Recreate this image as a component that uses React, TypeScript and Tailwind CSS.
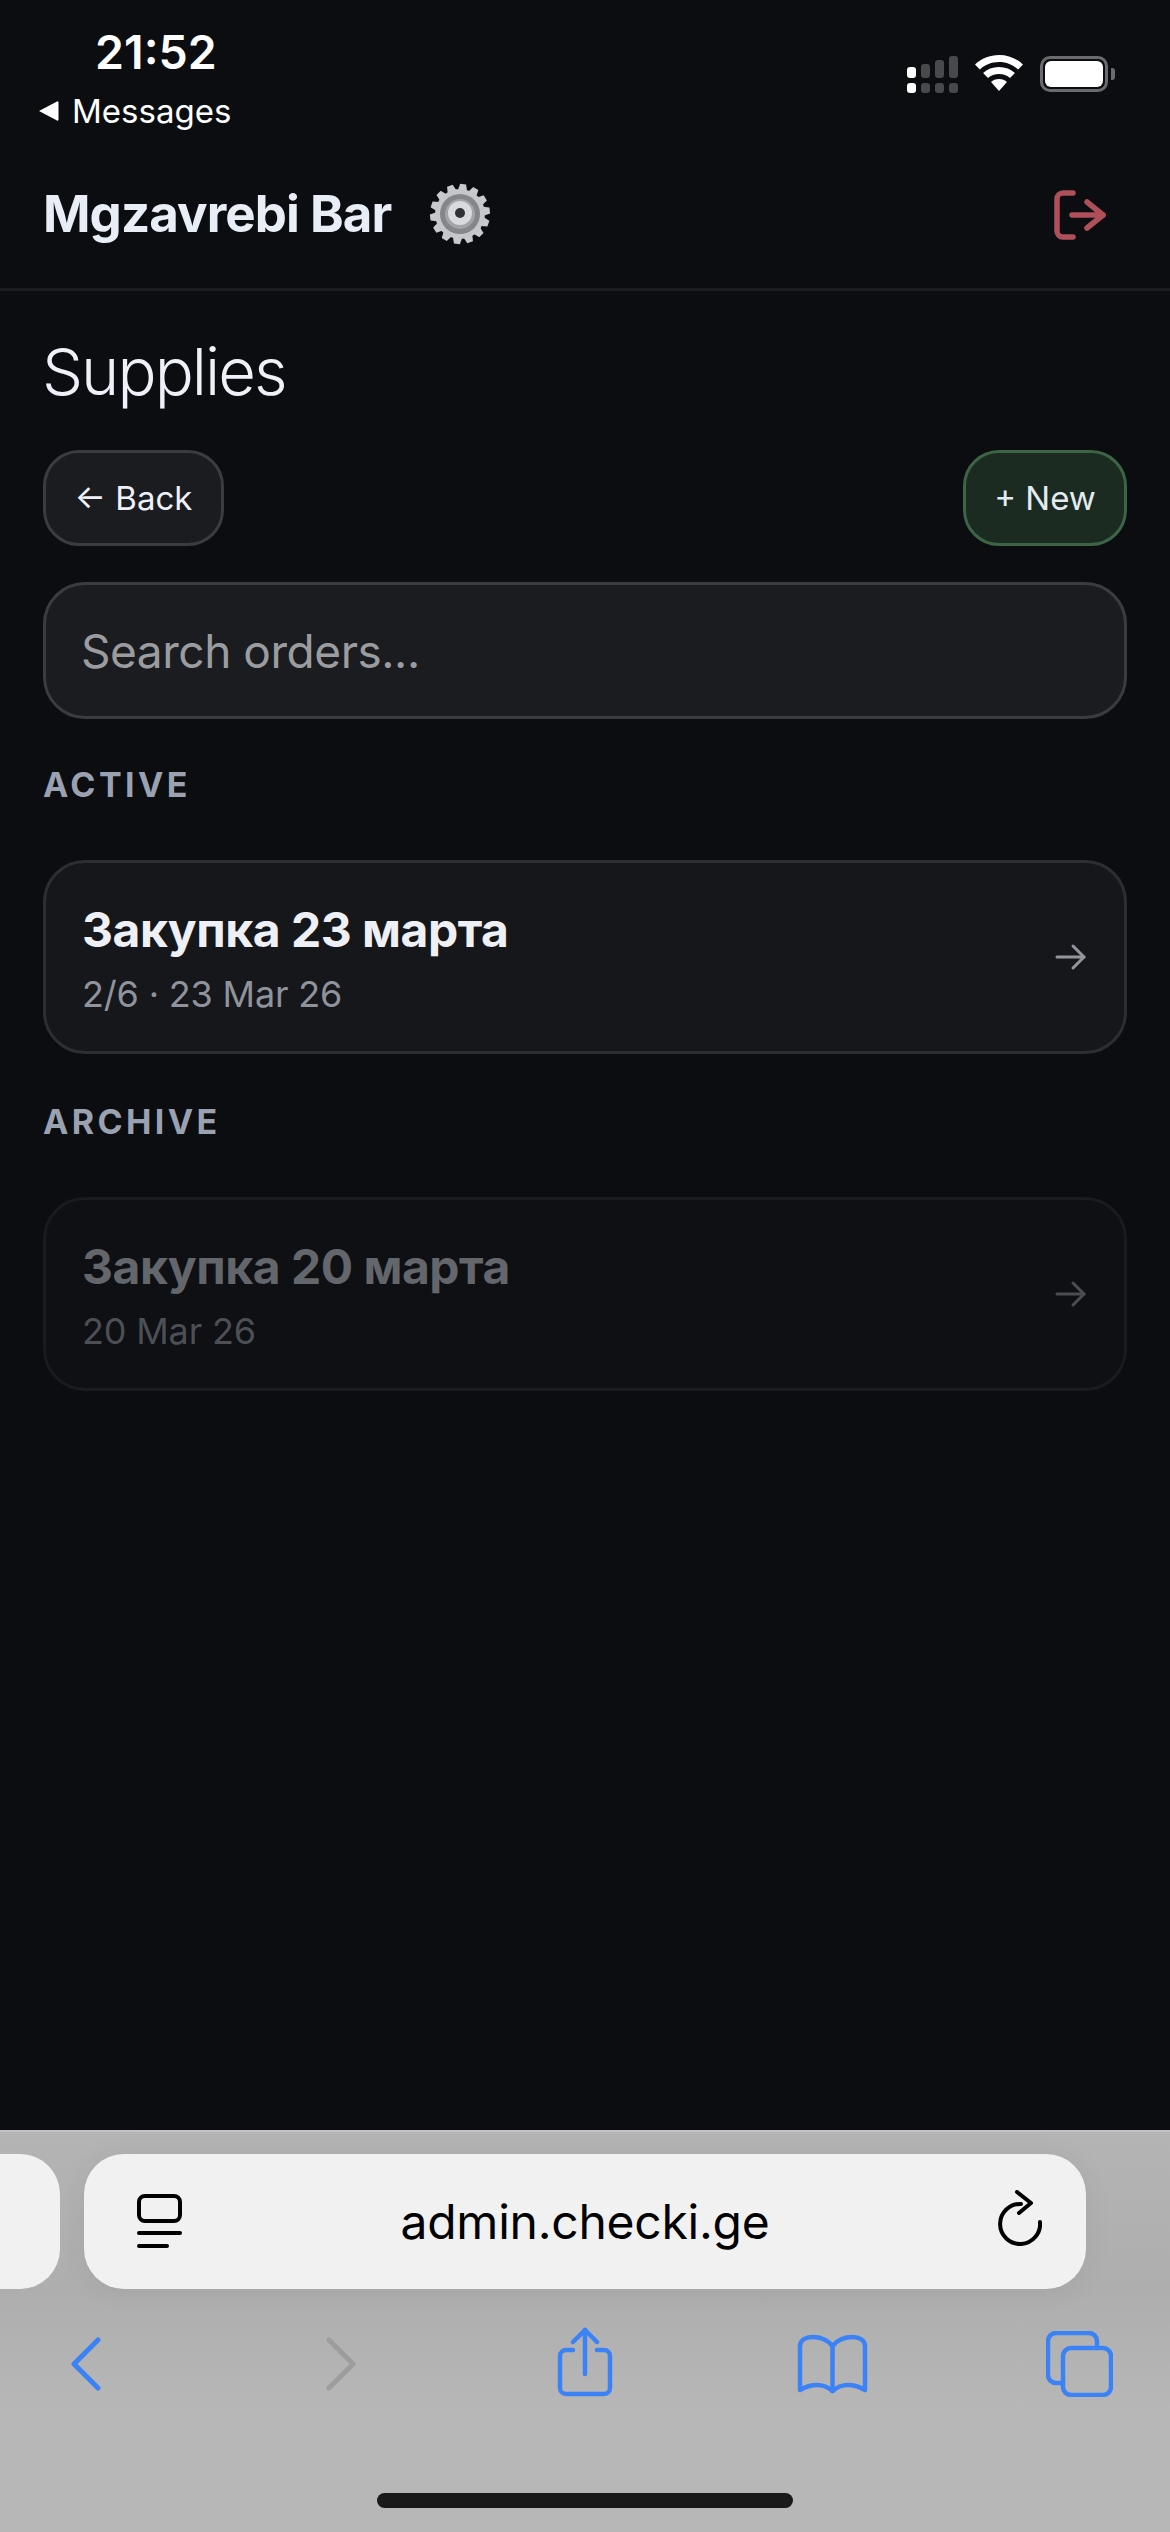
const teeth = Array.from({ length: 14 }, (_, i) => (i * 360) / 14);

function Gear() {
  return (
    <svg width="66" height="66" viewBox="0 0 66 66" className="shrink-0">
      <g transform="rotate(6 33 33)">
        {teeth.map((a) => (
          <path key={a} d="M28.500 9 L30 3 H36 L37.500 9 Z" fill="#c8c9cd" transform={`rotate(${a} 33 33)`} />
        ))}
      </g>
      <circle cx="33" cy="33" r="25" fill="#c6c7cb" />
      <circle cx="33" cy="33" r="20" fill="#85868a" />
      <circle cx="33" cy="33" r="15" fill="#a3a4a8" />
      <circle cx="33" cy="32" r="12" fill="#d9dadd" />
      <circle cx="33" cy="32" r="5" fill="#2f3136" />
    </svg>
  );
}

function Signal() {
  const hs = [11, 14, 18, 22];
  return (
    <svg width="51" height="38" viewBox="0 0 51 38" className="mt-[1px]">
      {hs.map((h, i) => (
        <g key={i} fill={i === 0 ? "#ffffff" : "#48494c"}>
          <rect x={i * 14} y={22 - h} width="9" height={h} rx="3" />
          <rect x={i * 14} y="27" width="9" height="10" rx="3" />
        </g>
      ))}
    </svg>
  );
}

function Wifi() {
  return (
    <svg width="48" height="36" viewBox="0 0 44 36" preserveAspectRatio="none" fill="#ffffff">
      <path d="M22 0C13.500 0 6 3.400 0 9.500l4.400 5C9.300 9.700 15.300 7 22 7s12.700 2.700 17.600 7.500l4.400-5C38 3.400 30.500 0 22 0z" />
      <path d="M22 12c-5.800 0-10.800 2.200-14.600 6l4.500 5c2.700-2.600 6.200-4.100 10.100-4.100s7.400 1.500 10.100 4.100l4.500-5C32.800 14.200 27.800 12 22 12z" />
      <path d="M22 24c-3 0-5.500 1.100-7.300 2.900L22 36l7.300-9.100C27.500 25.100 25 24 22 24z" />
    </svg>
  );
}

function Battery() {
  return (
    <div className="flex items-center gap-[3px] mt-[1px]">
      <div className="w-[68px] h-[36px] rounded-[10px] border-[3px] border-[#6a6b6e] p-[2px]">
        <div className="w-full h-full rounded-[6px] bg-white" />
      </div>
      <div className="w-[4px] h-[12px] rounded-r-[3px] bg-[#6a6b6e]" />
    </div>
  );
}

function Logout() {
  return (
    <svg width="52" height="50" viewBox="0 0 52 50" fill="none" stroke="#ae4f59" strokeWidth="5.500" strokeLinecap="round" strokeLinejoin="round" className="mt-[2px]">
      <path d="M19 3H9a6 6 0 0 0-6 6v32a6 6 0 0 0 6 6h10" />
      <path d="M18 25h31" />
      <path d="M33 12l16 13-16 13" />
    </svg>
  );
}

function ArrowRight({ color }: { color: string }) {
  return (
    <svg width="32" height="28" viewBox="0 0 32 28" fill="none" stroke={color} strokeWidth="3" strokeLinecap="round" strokeLinejoin="round">
      <path d="M2 14h27" />
      <path d="M18 3l11 11-11 11" />
    </svg>
  );
}

function OrderCard({ title, sub, muted }: { title: string; sub: string; muted?: boolean }) {
  return (
    <div
      className={
        muted
          ? "h-[194px] rounded-[42px] border-[3px] border-[#191b1f] bg-[#0e1014] pl-[36px] pr-[37px] flex items-center justify-between"
          : "h-[194px] rounded-[42px] border-[3px] border-[#2c2e33] bg-[#15171b] pl-[36px] pr-[37px] flex items-center justify-between"
      }
    >
      <div className="flex flex-col pt-[2px]">
        <div className={muted ? "text-[48px] leading-[62px] font-bold tracking-[-0.01em] text-[#63666b]" : "text-[48px] leading-[62px] font-bold tracking-[-0.01em] text-[#eef0f6]"}>{title}</div>
        <div className={muted ? "text-[36px] leading-[46px] mt-[10px] tracking-[-0.005em] text-[#4c4f54]" : "text-[36px] leading-[46px] mt-[10px] tracking-[-0.005em] text-[#8f939b]"}>{sub}</div>
      </div>
      <ArrowRight color={muted ? "#4a4d52" : "#92959c"} />
    </div>
  );
}

export default function App() {
  return (
    <div className="w-[1170px] h-[2532px] bg-[#0b0d11] flex flex-col overflow-hidden font-['Inter',sans-serif]">
      <div className="h-[288px] flex flex-col shrink-0">
        <div className="h-[136px] flex justify-between">
          <div className="pl-[38px] pt-[25px] flex flex-col">
            <div className="pl-[57px] text-[46.500px] leading-[54px] font-semibold text-white">21:52</div>
            <div className="mt-[12px] flex items-center gap-[13px] text-[33px] leading-[40px] text-white">
              <svg width="21" height="20" viewBox="0 0 21 20" fill="#ffffff"><path d="M1 10 19 .5a1 1 0 0 1 1.500 1v17a1 1 0 0 1-1.500 1z" /></svg>
              <span>Messages</span>
            </div>
          </div>
          <div className="pr-[55px] pt-[55px] flex items-start gap-[17px]">
            <Signal />
            <Wifi />
            <Battery />
          </div>
        </div>
        <div className="flex-1 pl-[43px] pr-[64px] flex items-center justify-between pt-[4px]">
          <div className="flex items-center gap-[36px]">
            <span className="text-[51px] leading-[60px] font-bold tracking-[-0.018em] text-[#e9edf6]">Mgzavrebi Bar</span>
            <Gear />
          </div>
          <Logout />
        </div>
      </div>
      <div className="h-[3px] bg-[#1a1c20] shrink-0" />

      <div className="flex-1 px-[43px] pt-[41px] flex flex-col">
        <h1 className="ml-[-1px] text-[65px] leading-[80px] font-light tracking-[-0.03em] text-[#eef1f8]">Supplies</h1>
        <div className="mt-[38px] flex justify-between">
          <button className="w-[181px] h-[96px] pt-[2px] rounded-[36px] border-[3px] border-[#3a3c41] bg-[#1a1c20] text-[33px] text-[#eef1f8]">← Back</button>
          <button className="w-[164px] h-[96px] pt-[2px] rounded-[36px] border-[3px] border-[#3d6545] bg-[#1b2b22] text-[33px] text-[#e4ebf0]">+ New</button>
        </div>
        <input
          readOnly
          placeholder="Search orders..."
          className="mt-[36px] h-[137px] w-full rounded-[42px] border-[3px] border-[#3a3c41] bg-[#1a1c20] px-[35px] text-[46px] tracking-[-0.01em] outline-none placeholder:text-[#9b9c9f]"
        />
        <div className="mt-[44px] text-[34px] leading-[44px] font-bold tracking-[0.1em] text-[#9aa1b0]">ACTIVE</div>
        <div className="mt-[53px]">
          <OrderCard title="Закупка 23 марта" sub="2/6 · 23 Mar 26" />
        </div>
        <div className="mt-[46px] text-[34px] leading-[44px] font-bold tracking-[0.1em] text-[#9aa1b0]">ARCHIVE</div>
        <div className="mt-[53px]">
          <OrderCard title="Закупка 20 марта" sub="20 Mar 26" muted />
        </div>
      </div>

      <div className="h-[402px] shrink-0 border-t-[2px] border-[#c4c4c4] flex flex-col bg-gradient-to-b from-[#b4b4b4] via-[#aeaeae] via-40% to-[#b7b7b8] to-70%">
        <div className="pt-[22px] flex gap-[24px]">
          <div className="w-[60px] h-[135px] rounded-r-[40px] bg-[#f1f1f1]" />
          <div className="w-[1002px] h-[135px] rounded-[40px] bg-[#f1f1f1] shadow-[0_2px_30px_rgba(0,0,0,0.06)] pl-[53px] pr-[44px] flex items-center justify-between">
            <svg width="45" height="54" viewBox="0 0 45 54" fill="none" stroke="#000000" strokeWidth="4" strokeLinecap="round" className="mt-[-2px] shrink-0">
              <rect x="2" y="2" width="41" height="25" rx="6" />
              <path d="M2 39h41" />
              <path d="M2 52h28" />
            </svg>
            <span className="mr-[9px] text-[48px] tracking-[-0.005em] text-black">admin.checki.ge</span>
            <svg width="45" height="56" viewBox="0 0 45 56" fill="none" stroke="#000000" strokeWidth="4" strokeLinecap="round" strokeLinejoin="round" className="mt-[-8px] shrink-0">
              <path d="M24 14A20 20 0 1 0 43 32" />
              <path d="M20 2l14 11-12 10" />
            </svg>
          </div>
        </div>
        <div className="mt-[38px] flex items-start pl-[71px]">
          <svg width="30" height="54" viewBox="0 0 30 54" fill="none" stroke="#3b82f6" strokeWidth="5" strokeLinecap="round" strokeLinejoin="round" className="mt-[10px] shrink-0">
            <path d="M27 3 3 27l24 24" />
          </svg>
          <svg width="30" height="54" viewBox="0 0 30 54" fill="none" stroke="#9d9d9e" strokeWidth="5" strokeLinecap="round" strokeLinejoin="round" className="ml-[225px] mt-[10px] shrink-0">
            <path d="M3 3l24 24L3 51" />
          </svg>
          <svg width="56" height="70" viewBox="0 0 56 70" fill="none" stroke="#3b82f6" strokeWidth="4.500" strokeLinecap="round" strokeLinejoin="round" className="ml-[201px] shrink-0">
            <path d="M16 23H9a6 6 0 0 0-6 6v32a6 6 0 0 0 6 6h38a6 6 0 0 0 6-6V29a6 6 0 0 0-6-6h-7" />
            <path d="M28 47V3" />
            <path d="M16 15 28 3l12 12" />
          </svg>
          <svg width="71" height="60" viewBox="0 0 71 60" fill="none" stroke="#3b82f6" strokeWidth="4.500" strokeLinecap="round" strokeLinejoin="round" className="ml-[184px] mt-[7px] shrink-0">
            <path d="M35.500 12C30 5 23 3 15 3 9 3 3 6 3 12v44c5-3 11-5 17-5 7 0 11 2 15.500 6 4.500-4 8.500-6 15.500-6 6 0 12 2 17 5V12c0-6-6-9-12-9-8 0-15 2-20.500 9z" />
            <path d="M35.500 12v45" />
          </svg>
          <svg width="67" height="66" viewBox="0 0 67 66" fill="none" stroke="#3b82f6" strokeWidth="4.500" strokeLinecap="round" strokeLinejoin="round" className="ml-[178px] mt-[4px] shrink-0">
            <path d="M51 17v-7a8 8 0 0 0-8-8H10a8 8 0 0 0-8 8v34a8 8 0 0 0 8 8h6" />
            <rect x="17" y="17" width="48" height="47" rx="8" />
          </svg>
        </div>
        <div className="mt-[96px] mx-auto w-[416px] h-[15px] rounded-full bg-[#1a1a1a]" />
      </div>
    </div>
  );
}
